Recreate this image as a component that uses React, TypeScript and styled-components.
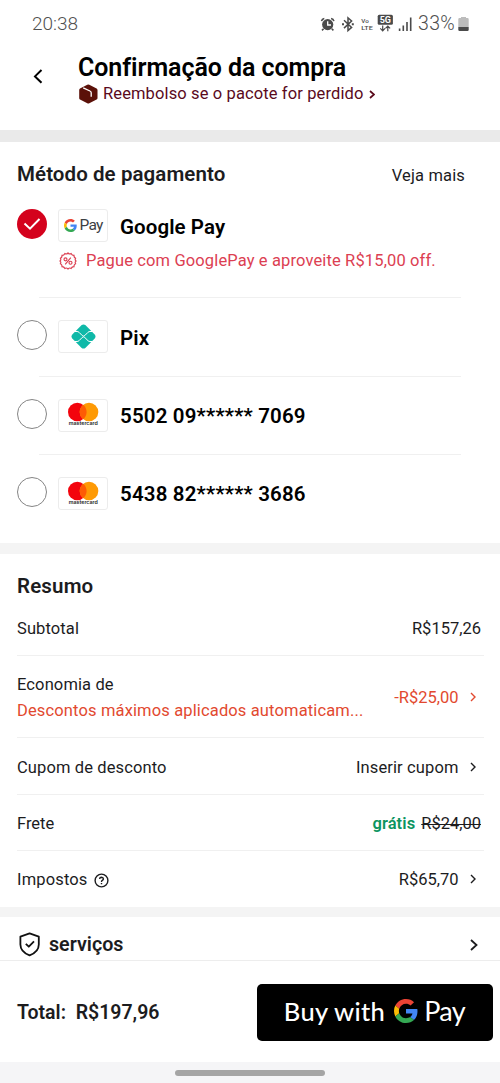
import React from "react";
import styled, { createGlobalStyle } from "styled-components";

const Global = createGlobalStyle`
  * { box-sizing: border-box; }
  body { margin: 0; background: #fff; font-family: Roboto, "Liberation Sans", sans-serif; color: #1c1c1e; }
  svg { display: block; flex: none; }
`;

const Screen = styled.main`
  width: 500px;
  height: 1083px;
  display: flex;
  flex-direction: column;
  overflow: hidden;
  background: #fff;
`;

const Text = styled.span<{ $size?: number; $weight?: number; $color?: string; $track?: number; $line?: number }>`
  font-size: ${(p) => p.$size ?? 16.5}px;
  font-weight: ${(p) => p.$weight ?? 400};
  color: ${(p) => p.$color ?? "inherit"};
  letter-spacing: ${(p) => p.$track ?? 0}px;
  line-height: ${(p) => p.$line ?? 24}px;
  white-space: pre;
`;

const Heading = styled(Text)`
  font-size: ${(p) => p.$size ?? 20.5}px;
  font-weight: 600;
  letter-spacing: ${(p) => p.$track ?? 0.08}px;
`;

const StatusBar = styled.div`
  height: 48px;
  padding: 0 31px 0 32px;
  display: flex;
  align-items: center;
  justify-content: space-between;
  color: #505050;
`;

const StatusIcons = styled.div`
  display: flex;
  align-items: center;
  gap: 3px;
`;

const Header = styled.header`
  height: 82px;
  padding: 5px 0 0 32px;
  display: flex;
`;

const BackButton = styled.div`
  width: 46px;
  padding-top: 15px;
`;

const Titles = styled.div`
  display: flex;
  flex-direction: column;
`;

const Protection = styled.div`
  display: flex;
  align-items: center;
  height: 24px;
  padding-left: 1px;
  gap: 5px;
`;

const Band = styled.div<{ $h: number; $color?: string }>`
  flex: none;
  height: ${(p) => p.$h}px;
  background: ${(p) => p.$color ?? "#f4f4f4"};
`;

const Payment = styled.section`
  height: 401px;
  padding: 20px 39px 0 17px;
`;

const SectionHead = styled.div`
  display: flex;
  justify-content: space-between;
  margin-right: -4px;
  height: 47px;
`;

const Method = styled.div<{ $h: number }>`
  height: ${(p) => p.$h}px;
`;

const MethodLine = styled.div`
  display: flex;
  align-items: flex-start;
`;

const Rule = styled.div`
  height: 1px;
  margin: 0 0 22px 22px;
  background: #f0f0f0;
`;

const Radio = styled.div<{ $on?: boolean }>`
  width: 30px;
  height: 30px;
  flex: none;
  border-radius: 50%;
  border: ${(p) => (p.$on ? "0" : "1.4px solid #858585")};
  background: ${(p) => (p.$on ? "#d4021d" : "#fff")};
  display: flex;
  align-items: center;
  justify-content: center;
`;

const Brand = styled.div`
  width: 50px;
  height: 33px;
  margin: 0 12px 3px 11px;
  padding-bottom: 1px;
  flex: none;
  border: 1.5px solid #ececec;
  border-radius: 3px;
  display: flex;
  align-items: center;
  justify-content: center;
  gap: 3px;
`;

const Promo = styled.div`
  display: flex;
  align-items: center;
  gap: 9px;
  margin: 4px 0 0 42px;
`;

const Summary = styled.section`
  height: 353px;
  padding: 20px 16px 0 17px;
  display: flex;
  flex-direction: column;
`;

const SummaryRow = styled.div<{ $h: number; $top?: number; $last?: boolean }>`
  flex: none;
  height: ${(p) => p.$h}px;
  padding: ${(p) => p.$top ?? 3}px 3px 0 0;
  display: flex;
  align-items: center;
  justify-content: space-between;
  border-bottom: ${(p) => (p.$last ? "0" : "1px solid #f0f0f0")};
`;

const Stack = styled.div`
  display: flex;
  flex-direction: column;
`;

const Value = styled.div<{ $gap?: number; $color?: string }>`
  display: flex;
  align-items: center;
  gap: ${(p) => p.$gap ?? 10}px;
  color: ${(p) => p.$color ?? "#1c1c1e"};
`;

const LinkValue = styled(Value)`
  gap: 11px;
  padding-right: 5px;

  svg { margin-bottom: 2px; }
`;

const Struck = styled(Text)`
  text-decoration: line-through;
  text-decoration-thickness: 1.3px;
`;

const Services = styled.section`
  height: 44px;
  padding: 12px 22px 0 19px;
  display: flex;
  align-items: center;
  justify-content: space-between;
  border-bottom: 1px solid #ededed;
`;

const Checkout = styled.footer`
  height: 101px;
  padding: 2px 7px 0 17px;
  display: flex;
  align-items: center;
  justify-content: space-between;
`;

const PayButton = styled.button`
  width: 236px;
  height: 57px;
  padding: 0 1px 3px 0;
  border: 0;
  border-radius: 5px;
  background: #000;
  color: #fff;
  display: flex;
  align-items: center;
  justify-content: center;
  gap: 9px;
  font-family: Lato, sans-serif;
`;

const PayMark = styled.div`
  display: flex;
  align-items: center;
  gap: 6px;
`;

const NavBar = styled.div`
  height: 21px;
  background: #f5f5f7;
  display: flex;
  justify-content: center;
  padding-top: 8px;
`;

const Handle = styled.div`
  width: 150px;
  height: 6px;
  border-radius: 3px;
  background: #a5a5a5;
`;

const GoogleG = ({ size }: { size: number }) => (
  <svg width={size} height={size} viewBox="0 0 48 48">
    <path fill="#EA4335" d="M24 9.5c3.54 0 6.71 1.22 9.21 3.6l6.85-6.85C35.9 2.38 30.47 0 24 0 14.62 0 6.51 5.38 2.56 13.22l7.98 6.19C12.43 13.72 17.74 9.5 24 9.5z" />
    <path fill="#4285F4" d="M46.98 24.55c0-1.57-.15-3.09-.38-4.55H24v9.02h12.94c-.58 2.96-2.26 5.48-4.78 7.18l7.73 6c4.51-4.18 7.09-10.36 7.09-17.65z" />
    <path fill="#FBBC05" d="M10.53 28.59c-.48-1.45-.76-2.99-.76-4.59s.27-3.14.76-4.59l-7.98-6.19C.92 16.46 0 20.12 0 24c0 3.88.92 7.54 2.56 10.78l7.97-6.19z" />
    <path fill="#34A853" d="M24 48c6.48 0 11.93-2.13 15.89-5.81l-7.73-6c-2.15 1.45-4.92 2.3-8.16 2.3-6.26 0-11.57-4.22-13.47-9.91l-7.98 6.19C6.51 42.62 14.62 48 24 48z" />
  </svg>
);

const Chevron = ({ w = 4.5, h = 8, stroke = 1.4 }: { w?: number; h?: number; stroke?: number }) => (
  <svg width={w + 2} height={h + 2} viewBox={`-1 -1 ${w + 2} ${h + 2}`} fill="none" stroke="currentColor" strokeWidth={stroke}>
    <path d={`M0 0L${w - 0.5} ${h / 2}L0 ${h}`} />
  </svg>
);

const SignalIcons = () => (
  <svg width="95" height="20" viewBox="319 14 95 20" fill="none" stroke="#4a4a4a">
    <circle cx="326.7" cy="24.6" r="5.6" fill="#4a4a4a" stroke="none" />
    <path d="M320.5 21.2Q321 18.8 323.3 18.5M332.9 21.2Q332.4 18.8 330.1 18.5M322.6 28.8L321 30.4M330.8 28.8L332.4 30.4" strokeWidth="1.6" />
    <path d="M326.7 21.3V25H330" stroke="#fff" strokeWidth="1.3" />
    <path d="M343 20.3L350.6 27.4L347 30.6V17.8L350.6 21L343 28.1" strokeWidth="1.5" />
    <path d="M341 24.2h2M350.8 24.2h2" strokeWidth="2" />
    <g fill="#4a4a4a" stroke="none" fontFamily="Roboto, sans-serif" fontWeight="500">
      <text x="360.3" y="22.8" fontSize="6" textLength="7.5" lengthAdjust="spacingAndGlyphs">Vo</text>
      <text x="360.3" y="30.4" fontSize="6.2" textLength="11.5" lengthAdjust="spacingAndGlyphs">LTE</text>
    </g>
    <rect x="376.7" y="14.7" width="15.2" height="10" rx="1.5" fill="#4a4a4a" stroke="none" />
    <text x="378.7" y="23" fontSize="9" fontWeight="700" fontFamily="Roboto, sans-serif" fill="#fff" stroke="none" textLength="11.3">5G</text>
    <path d="M381.7 25.5V31M379.3 28.4L381.7 30.8L384 28.4M386.8 31.2V26M384.5 28.4L386.8 26L389.1 28.4" strokeWidth="1.2" />
    <path d="M398.6 31V28.5M402.3 31V25.5M406 31V22M409.7 31V17.4" strokeWidth="1.6" />
  </svg>
);

const Battery = () => (
  <svg width="11" height="16" viewBox="0 0 11 16">
    <path d="M3 1h5v1h1.5q1.2 0 1.2 1.2V11H.3V3.2Q.3 2 1.5 2H3z" fill="#bcbcbc" />
    <path d="M.3 11h10.4v2.8q0 1.2-1.2 1.2h-8Q.3 15 .3 13.8z" fill="#4a4a4a" />
  </svg>
);

const BoxIcon = () => (
  <svg width="19" height="20" viewBox="0 0 19 20">
    <path d="M8.3 .8Q9.300 .3 10.300 .8L17.600 4.400Q18.500 5 18.500 6V14Q18.500 15 17.600 15.500L10.300 19.200Q9.300 19.700 8.300 19.200L1 15.500Q.2 15 .2 14V6Q.2 5 1 4.400z" fill="#5b1109" />
    <path d="M4.2 3.900L11 7Q12.200 7.500 12.200 8.800V12.800" fill="none" stroke="#fff" strokeWidth="1.300" />
  </svg>
);

const PromoIcon = () => (
  <svg width="18" height="18" viewBox="0 0 18 18" fill="none" stroke="#dc4052" strokeWidth="1.150">
    <path d="M9 1Q10.600 2.700 12.100 1.550Q13 3.500 15 3.400Q14.700 5.300 16.600 6.200Q15.600 7.800 17 9Q15.600 10.200 16.600 11.800Q14.700 12.700 15 14.600Q13 14.500 12.100 16.450Q10.600 15.300 9 17Q7.400 15.300 5.900 16.450Q5 14.500 3 14.600Q3.300 12.700 1.400 11.800Q2.400 10.200 1 9Q2.400 7.800 1.400 6.200Q3.300 5.300 3 3.400Q5 3.500 5.900 1.550Q7.400 2.700 9 1z" />
    <path d="M11.800 5.600L6.200 12.400" />
    <circle cx="6.5" cy="7.3" r="1.5" />
    <circle cx="11.5" cy="10.7" r="1.5" />
  </svg>
);

const PixIcon = () => (
  <svg width="25" height="25" viewBox="0 0 25 25">
    <path d="M10.400 1.300Q12.500-.4 14.600 1.300L23.700 10.400Q25.300 12.500 23.700 14.600L14.600 23.700Q12.500 25.400 10.400 23.700L1.300 14.600Q-.3 12.500 1.300 10.400z" fill="#0fb9a8" />
    <path d="M3.500 7.500H6.100Q7.200 7.500 8 8.300L11.200 11.500Q12.500 12.800 13.800 11.500L17 8.300Q17.800 7.500 18.900 7.500H21.500M3.500 17.500H6.100Q7.200 17.500 8 16.700L11.200 13.500Q12.500 12.200 13.800 13.500L17 16.700Q17.800 17.500 18.900 17.500H21.500" fill="none" stroke="#fff" strokeWidth="1" />
  </svg>
);

const Mastercard = () => (
  <svg width="32" height="25" viewBox="0 0 32 25">
    <circle cx="10.3" cy="10" r="9.3" fill="#f3040d" />
    <circle cx="22" cy="10" r="9.3" fill="#fe9a05" />
    <path d="M16.150 2.770A9.300 9.300 0 0 1 16.150 17.230A9.300 9.300 0 0 1 16.150 2.770z" fill="#fe5b05" />
    <text x="1.8" y="23.4" fontSize="5" fontWeight="600" fontFamily="Inter, sans-serif" fill="#222" textLength="29" lengthAdjust="spacingAndGlyphs">mastercard</text>
  </svg>
);

const HelpIcon = () => (
  <svg width="15" height="15" viewBox="0 0 15 15" fill="none" stroke="#1c1c1e">
    <circle cx="7.5" cy="7.5" r="6.4" strokeWidth="1.400" />
    <path d="M5.600 6Q5.700 4.200 7.500 4.200Q9.400 4.300 9.400 5.900Q9.300 6.900 8.300 7.400Q7.500 7.800 7.500 8.900M7.500 9.900V11.300" strokeWidth="1.400" />
  </svg>
);

const ShieldIcon = () => (
  <svg width="22" height="25" viewBox="0 0 22 25" fill="none" stroke="#111" strokeWidth="1.800" strokeLinejoin="round">
    <path d="M10.600 1.400L19.800 4.700V12.500C19.800 18.200 15.500 21.500 10.600 23.400C5.700 21.500 1.400 18.200 1.400 12.500V4.700z" />
    <path d="M6.800 11.800L9.800 14.700L15 9.400" />
  </svg>
);

const cards = [
  { number: "5502 09****** 7069", height: 55.5 },
  { number: "5438 82****** 3686", height: 55 },
];

export default function App() {
  return (
    <Screen>
      <Global />
      <StatusBar>
        <Text $size={19} $weight={350}>20:38</Text>
        <StatusIcons>
          <SignalIcons />
          <Text $size={19.5} $weight={350} $track={0.3}>33%</Text>
          <Battery />
        </StatusIcons>
      </StatusBar>
      <Header>
        <BackButton>
          <svg width="12" height="16" viewBox="0 0 12 16" fill="none" stroke="#000" strokeWidth="2">
            <path d="M9.500 2L3 8.400L9.500 14.800" />
          </svg>
        </BackButton>
        <Titles>
          <Heading $size={25} $color="#000" $line={29} $track={-0.07}>Confirmação da compra</Heading>
          <Protection>
            <BoxIcon />
            <Text $color="#5a0a1c" $track={0.12}>Reembolso se o pacote for perdido</Text>
            <Value $color="#5a0a1c"><Chevron w={4.5} h={7} stroke={1.7} /></Value>
          </Protection>
        </Titles>
      </Header>
      <Band $h={12} $color="#eaeaea" />
      <Payment>
        <SectionHead>
          <Heading>Método de pagamento</Heading>
          <Text $line={28} $track={0.15}>Veja mais</Text>
        </SectionHead>
        <Method $h={88}>
          <MethodLine>
            <Radio $on>
              <svg width="18" height="14" viewBox="0 0 18 14" fill="none" stroke="#fff" strokeWidth="2">
                <path d="M1.500 6.500L7 11.700L16.500 2" />
              </svg>
            </Radio>
            <Brand>
              <GoogleG size={13} />
              <Text $size={15.5} $color="#3c4043" $track={-0.8}>Pay</Text>
            </Brand>
            <Heading $color="#000" $line={36}>Google Pay</Heading>
          </MethodLine>
          <Promo>
            <PromoIcon />
            <Text $color="#dc4052" $track={0.13}>Pague com GooglePay e aproveite R$15,00 off.</Text>
          </Promo>
        </Method>
        <Rule />
        <Method $h={55.5}>
          <MethodLine>
            <Radio />
            <Brand><PixIcon /></Brand>
            <Heading $color="#000" $line={36}>Pix</Heading>
          </MethodLine>
        </Method>
        {cards.map((card) => (
          <React.Fragment key={card.number}>
            <Rule />
            <Method $h={card.height}>
              <MethodLine>
                <Radio />
                <Brand><Mastercard /></Brand>
                <Heading $color="#000" $line={35} $track={0.18}>{card.number}</Heading>
              </MethodLine>
            </Method>
          </React.Fragment>
        ))}
      </Payment>
      <Band $h={11} />
      <Summary>
        <Heading $track={0.15}>Resumo</Heading>
        <SummaryRow $h={58} $top={5}>
          <Text $track={0.1}>Subtotal</Text>
          <Text>R$157,26</Text>
        </SummaryRow>
        <SummaryRow $h={82}>
          <Stack>
            <Text $line={26} $track={0.12}>Economia de</Text>
            <Text $line={26} $track={0.14} $color="#e2492f">Descontos máximos aplicados automaticam...</Text>
          </Stack>
          <LinkValue $color="#e2492f">
            <Text>-R$25,00</Text>
            <Chevron />
          </LinkValue>
        </SummaryRow>
        <SummaryRow $h={57}>
          <Text $track={0.12}>Cupom de desconto</Text>
          <LinkValue>
            <Text $track={0.12}>Inserir cupom</Text>
            <Chevron />
          </LinkValue>
        </SummaryRow>
        <SummaryRow $h={56}>
          <Text>Frete</Text>
          <Value $gap={6}>
            <Text $weight={600} $color="#0b9460" $track={0.1}>grátis</Text>
            <Struck>R$24,00</Struck>
          </Value>
        </SummaryRow>
        <SummaryRow $h={56} $top={2} $last>
          <Value $gap={6}>
            <Text $track={0.15}>Impostos</Text>
            <HelpIcon />
          </Value>
          <LinkValue>
            <Text>R$65,70</Text>
            <Chevron />
          </LinkValue>
        </SummaryRow>
      </Summary>
      <Band $h={10} />
      <Services>
        <Value $gap={8}>
          <ShieldIcon />
          <Heading $size={19.7} $track={0}>serviços</Heading>
        </Value>
        <Value><Chevron w={6} h={10} stroke={1.8} /></Value>
      </Services>
      <Checkout>
        <Heading $size={19.5} $track={0}>Total:  R$197,96</Heading>
        <PayButton>
          <Text $size={25.5} $weight={500} $track={0.3}>Buy with</Text>
          <PayMark>
            <GoogleG size={24} />
            <Text $size={27} $track={-0.6}>Pay</Text>
          </PayMark>
        </PayButton>
      </Checkout>
      <NavBar><Handle /></NavBar>
    </Screen>
  );
}
